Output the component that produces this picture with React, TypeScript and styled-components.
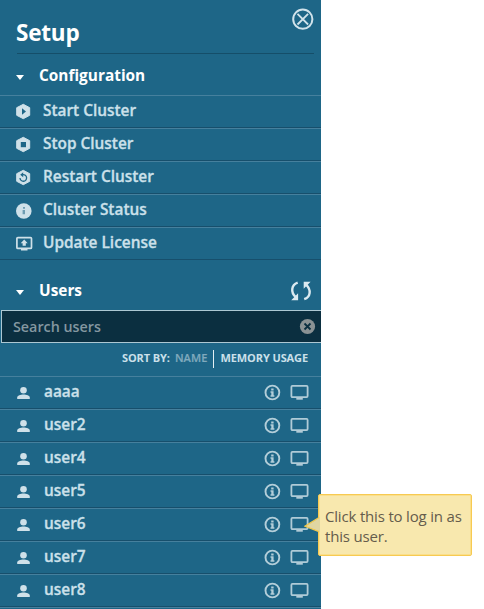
import React from 'react';
import styled, { createGlobalStyle } from 'styled-components';

const Global = createGlobalStyle`
  *, *::before, *::after { box-sizing: border-box; }
  body { margin: 0; background: #fff; overflow: hidden; font-family: "Open Sans", sans-serif; }
`;

const Stage = styled.div`
  position: relative;
  width: 484px;
  height: 609px;
  overflow: hidden;
`;

const Panel = styled.aside`
  width: 321px;
  height: 609px;
  overflow: hidden;
  background: #1e6687;
  color: #cbe0ea;
`;

const Header = styled.header`
  display: flex;
  justify-content: space-between;
  height: 54px;
  margin: 0 7px 0 17px;
  border-bottom: 1px solid #154e69;
`;

const Title = styled.h1`
  margin: 17px 0 0 -1px;
  font-size: 22.5px;
  line-height: 31px;
  font-weight: 700;
  letter-spacing: -0.2px;
  color: #fff;
`;

const SectionHead = styled.div<{ $height: number; $pad: number }>`
  display: flex;
  align-items: flex-start;
  height: ${p => p.$height}px;
  padding: ${p => p.$pad}px 9px 0 16px;
`;

const SectionName = styled.h2`
  flex: 1;
  margin: 1px 0 0 15px;
  font-size: 15.4px;
  line-height: 20px;
  font-weight: 700;
  color: #fff;
`;

const Caret = styled.span`
  margin-top: 10px;
  border: solid transparent;
  border-width: 5px 4.5px 0;
  border-top-color: #fff;
`;

const Row = styled.div`
  display: flex;
  align-items: center;
  height: 33px;
  padding: 0 12px 0 15px;
  border-top: 1px solid #46809d;
  border-bottom: 1px solid #174f6c;
`;

const Label = styled.span<{ $x: number }>`
  flex: 1;
  margin-left: ${p => p.$x}px;
  padding-bottom: 2px;
  font-size: 15.4px;
  line-height: 20px;
  font-weight: 600;
  -webkit-text-stroke: 0.3px currentColor;
`;

const Icon = styled.svg<{ $top?: number; $left?: number }>`
  display: block;
  flex: none;
  overflow: visible;
  margin-top: ${p => p.$top ?? 0}px;
  margin-left: ${p => p.$left ?? 0}px;
`;

const Search = styled.div`
  display: flex;
  align-items: center;
  height: 33px;
  margin-left: 1px;
  padding: 0 6px 0 11px;
  border: 1px solid #adc8d3;
  border-right: 0;
  background: #0b2f40;
`;

const Placeholder = styled.span`
  flex: 1;
  font-size: 14.3px;
  line-height: 20px;
  font-weight: 600;
  color: #8497a0;
`;

const SortBar = styled.div`
  display: flex;
  justify-content: flex-end;
  height: 33px;
  padding: 6px 13px 0 0;
  font-size: 11px;
  line-height: 18px;
  font-weight: 700;
  letter-spacing: -0.1px;
`;

const SortName = styled.span`
  height: 18px;
  margin: 1px 0 0 5px;
  padding-right: 6px;
  border-right: 1px solid #e4eff3;
  font-weight: 600;
  line-height: 16px;
  letter-spacing: 0.1px;
  color: #80aabd;
  -webkit-text-stroke: 0.2px currentColor;
`;

const SortMemory = styled.span`
  margin-left: 6px;
`;

const Tooltip = styled.div`
  position: absolute;
  left: 318px;
  top: 494px;
  width: 154px;
  height: 62px;
  padding: 11px 0 0 6px;
  border: 1px solid #f7ca52;
  border-radius: 2px;
  background: #f8e8ae;
  box-shadow: inset 0 0 0 1px #fadf8b;
  color: #655c4c;
  font-size: 15px;
  line-height: 20px;
  letter-spacing: -0.18px;
  white-space: nowrap;
`;

const Pointer = styled.svg`
  position: absolute;
  left: -15px;
  top: 21px;
`;

const PALE = '#cfe1e9';
const BG = '#1e6687';

const Hexagon = ({ children }: { children: React.ReactNode }) => (
  <Icon width="16" height="16" viewBox="0 0.5 16 16">
    <path d="M8.3 .8 14.7 4.2v7.6L8.3 15.2 1.7 11.8V4.2Z" fill={PALE} stroke={PALE} strokeLinejoin="round" />
    {children}
  </Icon>
);

const StartIcon = () => <Hexagon><path d="M7 4.8v6.4L11 8Z" fill={BG} /></Hexagon>;
const StopIcon = () => <Hexagon><rect x="5.8" y="5.5" width="5.2" height="5.2" fill={BG} /></Hexagon>;
const RestartIcon = () => (
  <Hexagon>
    <path d="M7.8 5.2A3.3 3.3 0 1 1 5 8.5" fill="none" stroke={BG} strokeWidth="1.3" />
    <path d="M8.2 2.7v5L5.2 5.2Z" fill={BG} />
  </Hexagon>
);
const StatusIcon = () => (
  <Icon width="16" height="16" viewBox="0 0 16 16">
    <circle cx="8.8" cy="8" r="7.8" fill={PALE} />
    <path d="M8 4h2v1.8H8ZM7.6 7H10v4.3H7.6Z" fill="#6f9db2" />
  </Icon>
);
const LicenseIcon = () => (
  <Icon width="16" height="16" viewBox="0 0 16 16">
    <rect x="1.9" y="1.6" width="14.6" height="10.8" rx="1" fill="none" stroke={PALE} strokeWidth="1.7" />
    <path d="M6 12.2h6.5v2.2H6ZM9.2 3.5 12.7 7.2H10.8v2.6H7.6V7.2H5.7Z" fill={PALE} />
  </Icon>
);
const PersonIcon = () => (
  <Icon width="16" height="16" viewBox="0 0 16 16">
    <circle cx="8.5" cy="5.3" r="3.3" fill={PALE} />
    <path d="M2.2 14v-1.4C2.2 10.4 5.5 9.5 8.5 9.5s6.3.9 6.3 3.1V14Z" fill={PALE} />
  </Icon>
);
const InfoIcon = () => (
  <Icon width="16" height="16" viewBox="0 0 16 16">
    <circle cx="8.4" cy="7.5" r="6.9" fill="none" stroke="#b3ced9" strokeWidth="1.9" />
    <path d="M7.2 3.6h2.4v1.8H7.2ZM6.5 6.3h3.1v3.9h.8v1.5H6.5v-1.5h.8V7.8h-.8Z" fill="#b3ced9" />
  </Icon>
);
const MonitorIcon = () => (
  <Icon width="19" height="17" viewBox="0 0 19 17" $left={10}>
    <rect x="1.4" y="1.9" width="16.2" height="11.2" rx="1" fill="none" stroke="#b0cbd7" strokeWidth="1.8" />
    <path d="M6.3 13h6.5v2.7H6.3Z" fill="#b0cbd7" />
  </Icon>
);
const CloseIcon = () => (
  <Icon width="22" height="22" viewBox="0 0 22 22" $top={8}>
    <circle cx="10.8" cy="11.2" r="9.6" fill="none" stroke="#d1e3eb" strokeWidth="2" />
    <path d="m5.5 5.9 10.6 10.6m0-10.6L5.5 16.5" stroke="#d1e3eb" strokeWidth="1.8" />
  </Icon>
);
const RefreshIcon = () => (
  <Icon width="23" height="20" viewBox="0 0 23 20" $top={1}>
    <g fill="none" stroke="#dceaf0" strokeWidth="2.4">
      <path d="M8.7 1.7C2.2 4 1.5 11 6.6 16" />
      <path d="M15.2 18.2C21.7 15.9 22.4 8.9 17.3 3.9" />
    </g>
    <path d="M2.2 19.2h6.9v-6.9ZM21.6.8h-6.9v6.9Z" fill="#dceaf0" />
  </Icon>
);
const ClearIcon = () => (
  <Icon width="16" height="16" viewBox="0 0 16 16">
    <circle cx="8.5" cy="7.5" r="7.6" fill="#8a9294" />
    <path d="m5.5 4.5 6 6m0-6-6 6" stroke="#0b2f40" strokeWidth="1.8" />
  </Icon>
);

const actions = [
  { name: 'Start Cluster', Glyph: StartIcon },
  { name: 'Stop Cluster', Glyph: StopIcon },
  { name: 'Restart Cluster', Glyph: RestartIcon },
  { name: 'Cluster Status', Glyph: StatusIcon },
  { name: 'Update License', Glyph: LicenseIcon },
];
const users = ['aaaa', 'user2', 'user4', 'user5', 'user6', 'user7', 'user8', ''];

export default function App() {
  return (
    <Stage>
      <Global />
      <Panel>
        <Header><Title>Setup</Title><CloseIcon /></Header>
        <SectionHead $height={41} $pad={11}><Caret /><SectionName>Configuration</SectionName></SectionHead>
        {actions.map(({ name, Glyph }) => (
          <Row key={name}><Glyph /><Label $x={12}>{name}</Label></Row>
        ))}
        <SectionHead $height={50} $pad={20}><Caret /><SectionName>Users</SectionName><RefreshIcon /></SectionHead>
        <Search><Placeholder>Search users</Placeholder><ClearIcon /></Search>
        <SortBar><span>SORT BY:</span><SortName>NAME</SortName><SortMemory>MEMORY USAGE</SortMemory></SortBar>
        {users.map(user => (
          <Row key={user}>
            {user && <><PersonIcon /><Label $x={13}>{user}</Label><InfoIcon /><MonitorIcon /></>}
          </Row>
        ))}
      </Panel>
      <Tooltip>
        Click this to log in as<br />this user.
        <Pointer width="16" height="18" viewBox="0 0 16 18">
          <path d="M16 1 1 10.2 16 16Z" fill="#e0d6a2" />
          <path d="M15 1.6 1 10.2l14 5.4" fill="none" stroke="#efc84f" strokeWidth="1.2" />
        </Pointer>
      </Tooltip>
    </Stage>
  );
}
